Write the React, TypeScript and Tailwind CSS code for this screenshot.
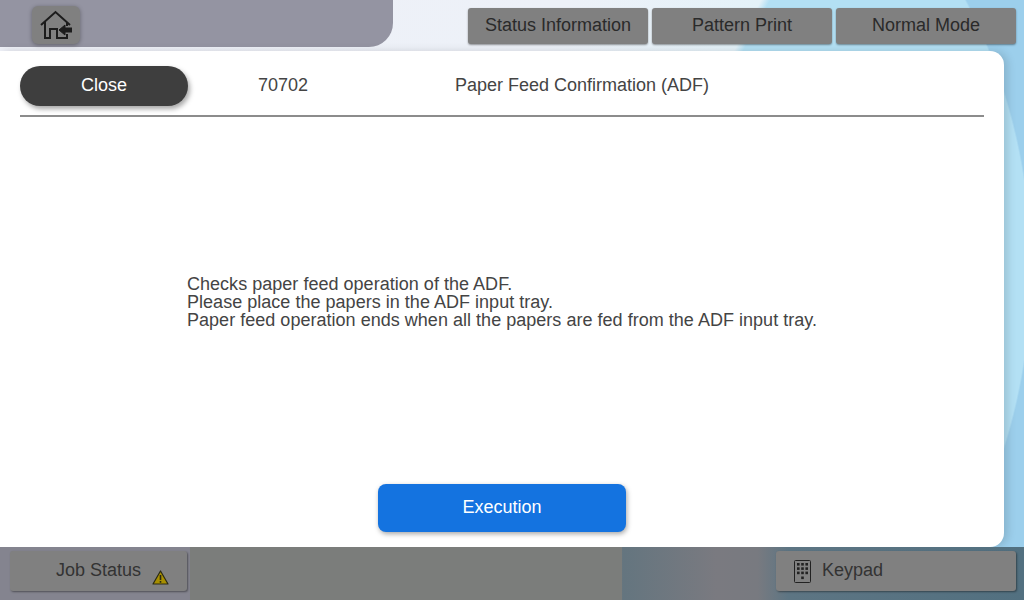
export default function App() {
  return (
    <div className="relative w-[1024px] h-[600px] overflow-hidden flex flex-col font-['Liberation_Sans',sans-serif] text-[18px] bg-[linear-gradient(118deg,#eef0f7_0px,#edf1f8_500px,#e4f2f9_672px,transparent_680px),radial-gradient(ellipse_432px_510px_at_600px_270px,#b3e0f4_99.6%,#9ccfec_100%)]">
      <header className="h-[51px] flex items-start shrink-0">
        <div className="w-[393px] h-[47px] rounded-br-[24px] bg-[#9494a2] pl-[32px] pt-[6px]">
          <button className="w-[48px] h-[38px] rounded-[6px] bg-[#808080] shadow-[0_1px_4px_rgba(0,0,0,0.35)] flex items-center justify-center">
            <svg width="34" height="30" viewBox="0 0 34 30" fill="none" stroke="#1c1c1c" strokeWidth="2">
              <path d="M2 15 L16.5 2 L31 15" />
              <path d="M6 12 V28 H11 V19 H18 V28 H28 V24 M28 12 V16" />
              <path d="M24 20 H33" strokeWidth="5" />
              <path d="M26 15 L20 20 L26 25 Z" fill="#1c1c1c" strokeWidth="1" />
            </svg>
          </button>
        </div>
        <nav className="ml-[75px] mt-[8px] flex gap-[4px] text-[#2a2a2a]">
          <button className="w-[180px] h-[36px] pb-[2px] rounded-[3px] bg-[#808080] shadow-[0_1px_2px_rgba(0,0,0,0.4)]">Status Information</button>
          <button className="w-[180px] h-[36px] pb-[2px] rounded-[3px] bg-[#808080] shadow-[0_1px_2px_rgba(0,0,0,0.4)]">Pattern Print</button>
          <button className="w-[180px] h-[36px] pb-[2px] rounded-[3px] bg-[#808080] shadow-[0_1px_2px_rgba(0,0,0,0.4)]">Normal Mode</button>
        </nav>
      </header>

      <main className="w-[1004px] h-[496px] shrink-0 bg-white rounded-r-[14px] shadow-[4px_0_9px_rgba(0,0,0,0.13)] flex flex-col px-[20px] pt-[15px] text-[#444444]">
        <div className="h-[49px] flex items-start border-b-2 border-[#8c8c8c] box-content">
          <button className="w-[168px] h-[40px] pb-[2px] rounded-full bg-[#3e3e3e] text-white shadow-[2px_3px_5px_rgba(0,0,0,0.35)]">Close</button>
          <span className="ml-[70px] w-[197px] leading-[38px]">70702</span>
          <span className="leading-[38px]">Paper Feed Confirmation (ADF)</span>
        </div>
        <div className="pl-[167px] pt-[158px] h-[367px] leading-[18px] tracking-[0.025px]">
          <p>Checks paper feed operation of the ADF.</p>
          <p>Please place the papers in the ADF input tray.</p>
          <p>Paper feed operation ends when all the papers are fed from the ADF input tray.</p>
        </div>
        <div className="pl-[358px]">
          <button className="w-[248px] h-[48px] pb-[2px] rounded-[8px] bg-[#1473e0] text-white shadow-[1px_2px_5px_rgba(0,0,0,0.35)]">Execution</button>
        </div>
      </main>

      <footer className="relative flex-1 flex items-start pt-[4px] pl-[10px] pr-[8px] justify-between text-[#333333] bg-[linear-gradient(90deg,#84848f_0%,#84848f_18.5%,#7b7d7b_18.6%,#7b7d7b_60.7%,#64757f_60.8%,#7a7a80_70%,#787a80_74%,#5d7583_77%,#527080_100%)]">
        <button className="relative w-[177px] h-[40px] rounded-[3px] bg-[#808080] shadow-[1px_1px_2px_rgba(0,0,0,0.4)] text-left pl-[46px] pb-[2px]">
          Job Status
          <svg className="absolute left-[142px] top-[19px]" width="17" height="15" viewBox="0 0 17 15">
            <path d="M8.5 1 L16 14 H1 Z" fill="#a88f00" stroke="#2a2a14" strokeWidth="1.2" strokeLinejoin="round" />
            <path d="M8.5 5 V10 M8.5 11 V12.8" stroke="#2a2a14" strokeWidth="1.6" />
          </svg>
        </button>
        <button className="w-[240px] h-[40px] rounded-[3px] bg-[#808080] shadow-[1px_1px_2px_rgba(0,0,0,0.4)] flex items-center pl-[18px] gap-[11px]">
          <svg width="17" height="23" viewBox="0 0 17 23" fill="#222">
            <rect x="0.5" y="0.5" width="16" height="22" rx="1" fill="none" stroke="#222" />
            <rect x="3" y="3" width="2.6" height="2.6" /><rect x="7.2" y="3" width="2.6" height="2.6" /><rect x="11.4" y="3" width="2.6" height="2.6" />
            <rect x="3" y="7.3" width="2.6" height="2.6" /><rect x="7.2" y="7.3" width="2.6" height="2.6" /><rect x="11.4" y="7.3" width="2.6" height="2.6" />
            <rect x="3" y="11.6" width="2.6" height="2.6" /><rect x="7.2" y="11.6" width="2.6" height="2.6" /><rect x="11.4" y="11.6" width="2.6" height="2.6" />
            <rect x="7.2" y="16.5" width="2.6" height="2.6" />
          </svg>
          <span className="pb-[2px]">Keypad</span>
        </button>
      </footer>
    </div>
  );
}
